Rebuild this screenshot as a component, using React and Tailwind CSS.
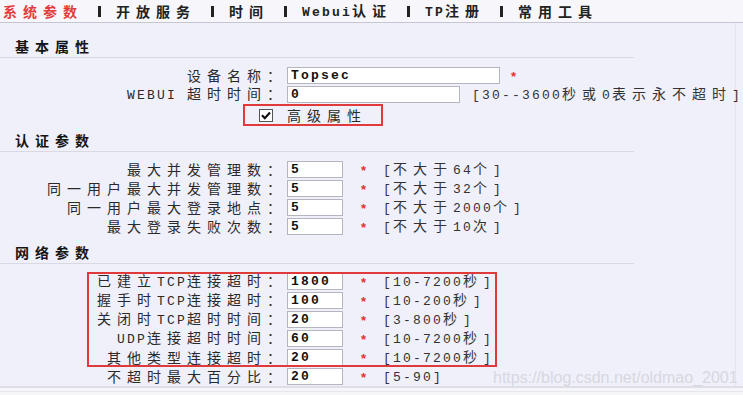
import React from "react";

const isAscii = (s) => /^[\x00-\x7F]+$/.test(s);

// the original UI uses a half-width/full-width bitmap font: latin cell 10px, CJK cell 20px
const Txt = ({ s }) =>
  s
    .split(/([\x00-\x7F]+)/)
    .filter(Boolean)
    .map((part, i) =>
      isAscii(part) ? (
        <span
          key={i}
          className="font-['Liberation_Mono',monospace] text-[13px] tracking-[2.2px] whitespace-pre"
        >
          {part}
        </span>
      ) : (
        <span key={i} className="text-[14px] tracking-[6px]">
          {part}
        </span>
      ),
    );

const tabs = ["系统参数", "开放服务", "时间", "Webui认证", "TP注册", "常用工具"];

const TabBar = () => (
  <div className="flex h-[23px] items-center border-b border-[#c6c6d2] bg-[#f7f7fb] pl-[3px] font-bold leading-[19px]">
    {tabs.map((t, i) => (
      <React.Fragment key={t}>
        {i > 0 && (
          <span className="flex w-[33px] justify-center">
            <span className="h-[11px] w-[3px] bg-[#222]" />
          </span>
        )}
        <span className={i === 0 ? "text-[#e23b3b]" : "text-[#222]"}>
          <Txt s={t} />
        </span>
      </React.Fragment>
    ))}
  </div>
);

const Header = ({ title, pt }) => (
  <div
    className={`w-[634px] border-b border-[#d9d9e4] pb-[1px] pl-[15px] font-bold leading-[19px] text-[#151515] ${pt}`}
  >
    <Txt s={title} />
  </div>
);

const Star = () => (
  <span className="font-['Liberation_Sans',sans-serif] text-[13px] font-bold text-[#e23232]">
    *
  </span>
);

const Field = ({ label, value, width = "w-[56px]", star = true, hint }) => (
  <div className="flex h-[19px] items-center whitespace-nowrap">
    <div className="w-[287px] shrink-0 text-right text-[#2a2a2a]">
      <Txt s={label} />
    </div>
    <input
      readOnly
      defaultValue={value}
      className={`h-[17px] ${width} shrink-0 border border-[#b5b5bf] bg-white pl-[3px] font-['Liberation_Mono',monospace] text-[13px] font-bold tracking-[2.2px] text-[#111] outline-none`}
    />
    {star && (
      <span className="ml-[18px] w-[22px] shrink-0">
        <Star />
      </span>
    )}
    {hint && (
      <span className={`${star ? "" : "ml-[12px]"} shrink-0 text-[#333]`}>
        <Txt s={hint} />
      </span>
    )}
  </div>
);

const netRows = [
  ["已建立TCP连接超时：", "1800", "[10-7200秒]"],
  ["握手时TCP连接超时：", "100", "[10-200秒]"],
  ["关闭时TCP超时时间：", "20", "[3-800秒]"],
  ["UDP连接超时时间：", "60", "[10-7200秒]"],
  ["其他类型连接超时：", "20", "[10-7200秒]"],
];

export default function App() {
  return (
    <div className="relative h-[395px] w-[743px] overflow-hidden bg-[#f0f0fa] font-['Noto_Sans_CJK_SC',sans-serif] text-[14px] leading-[19px]">
      <TabBar />
      <div className="w-[736px] border-r border-[#e3e3ee]">
        <Header title="基本属性" pt="pt-[14px]" />
        <div className="mt-[8px]">
          <div className="flex h-[19px] items-center">
            <div className="w-[287px] shrink-0 text-right text-[#2a2a2a]">
              <Txt s="设备名称：" />
            </div>
            <input
              readOnly
              defaultValue="Topsec"
              className="h-[17px] w-[213px] border border-[#b5b5bf] bg-white pl-[3px] font-['Liberation_Mono',monospace] text-[13px] font-bold tracking-[2.2px] text-[#111] outline-none"
            />
            <span className="ml-[11px]">
              <Star />
            </span>
          </div>
          <Field
            label="WEBUI 超时时间："
            value="0"
            width="w-[173px]"
            star={false}
            hint="[30--3600秒或0表示永不超时]"
          />
          <div className="flex h-[22px]">
            <label className="ml-[243px] flex w-[140px] items-center border-2 border-[#e03a3a] pl-[14px] text-[#2a2a2a]">
              <svg width="14" height="13" viewBox="0 0 14 13">
                <rect x="0.5" y="0.5" width="13" height="12" fill="#fff" stroke="#555" />
                <path d="M3 6.2 L5.8 9.2 L11 3.4" fill="none" stroke="#111" strokeWidth="2.2" />
              </svg>
              <span className="ml-[14px]">
                <Txt s="高级属性" />
              </span>
            </label>
          </div>
        </div>

        <Header title="认证参数" pt="pt-[5px]" />
        <div className="mt-[8px]">
          <Field label="最大并发管理数：" value="5" hint="[不大于64个]" />
          <Field label="同一用户最大并发管理数：" value="5" hint="[不大于32个]" />
          <Field label="同一用户最大登录地点：" value="5" hint="[不大于2000个]" />
          <Field label="最大登录失败次数：" value="5" hint="[不大于10次]" />
        </div>

        <Header title="网络参数" pt="pt-[7px]" />
        <div className="mt-[8px]">
          <div className="relative">
            {netRows.map(([l, v, h]) => (
              <Field key={l} label={l} value={v} hint={h} />
            ))}
            <div className="pointer-events-none absolute inset-y-0 left-[87px] w-[410px] border-2 border-[#e03a3a]" />
          </div>
          <Field label="不超时最大百分比：" value="20" hint="[5-90]" />
        </div>
      </div>
      <div className="h-[9px] border-t-2 border-[#dedee6] bg-[#f6f6f9]">
        <div className="mt-[3px] border-t border-[#e6e6ec]" />
      </div>
      <div className="absolute left-[493px] top-[368px] font-['Liberation_Sans',sans-serif] text-[16px] leading-[20px] text-[#d7d7e0]">
        https://blog.csdn.net/oldmao_2001
      </div>
    </div>
  );
}
